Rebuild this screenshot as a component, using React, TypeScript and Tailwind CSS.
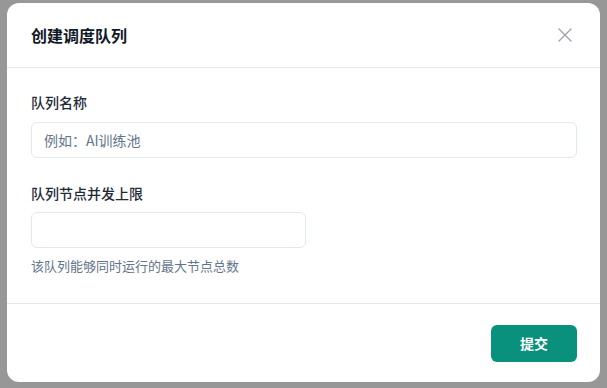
import React from "react";

export default function App() {
  const font = { fontFamily: '"Noto Sans CJK SC", "Noto Sans", sans-serif' };
  return (
    <div className="w-[607px] h-[388px] bg-[#979797] overflow-hidden" style={font}>
      <div className="mx-auto mt-[3px] w-[593px] bg-white rounded-xl flex flex-col">
        <div className="h-[65px] border-b border-[#e5e7eb] flex items-center justify-between pl-6 pr-[28px]">
          <h2 className="text-[16px] font-bold text-[#111827] leading-6">创建调度队列</h2>
          <svg width="14" height="14" viewBox="0 0 14 14" fill="none" className="mt-[-1px]">
            <path d="M1 1L13 13M13 1L1 13" stroke="#9ca3af" strokeWidth="1.4" strokeLinecap="round" />
          </svg>
        </div>
        <div className="pl-6 pr-[23px] pt-6 pb-[27px] flex flex-col">
          <label className="block text-[14px] leading-5 font-medium text-[#1f2937]">队列名称</label>
          <div className="mt-2.5 h-9 w-full rounded-md border border-[#e2e8f0] flex items-center px-3 text-[14px] text-[#64748b]">
            例如：AI训练池
          </div>
          <label className="block mt-[25px] text-[14px] leading-5 font-medium text-[#1f2937]">队列节点并发上限</label>
          <div className="mt-[9px] h-9 w-[275px] rounded-md border border-[#e2e8f0]" />
          <p className="mt-2 text-[13px] leading-5 text-[#64748b]">该队列能够同时运行的最大节点总数</p>
        </div>
        <div className="border-t border-[#e5e7eb] pt-[21px] pb-5 pl-6 pr-[23px] flex justify-end">
          <button className="w-[86px] h-[37px] rounded-md bg-[#0a917e] text-white text-[14px] font-bold">提交</button>
        </div>
      </div>
    </div>
  );
}
